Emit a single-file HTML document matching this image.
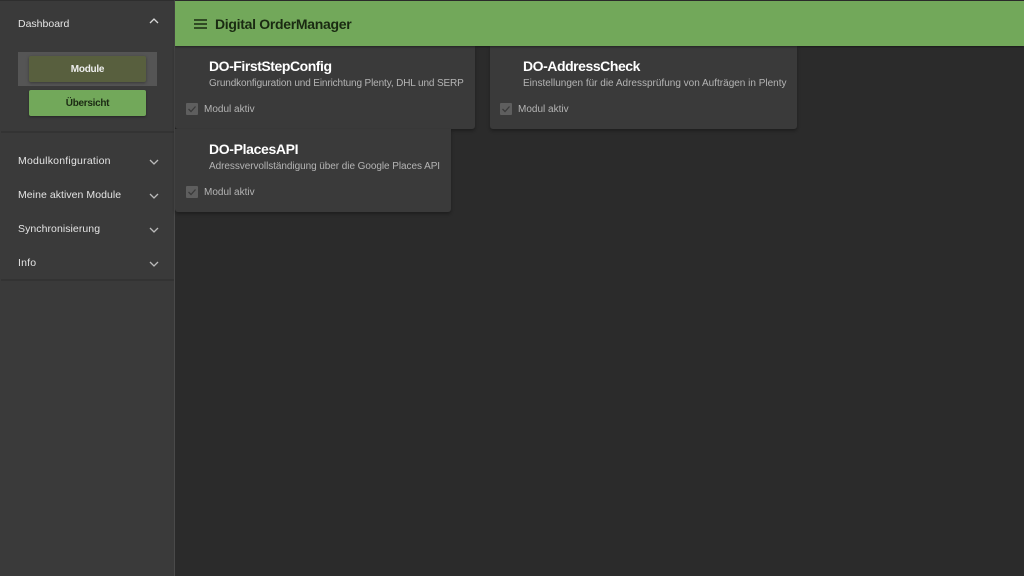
<!DOCTYPE html>
<html><head><meta charset="utf-8">
<style>
*{box-sizing:border-box}
html,body{margin:0;padding:0;width:1024px;height:576px;overflow:hidden;background:#2b2b2b;font-family:"Liberation Sans",sans-serif}
.a{position:absolute;white-space:nowrap}
.side{left:0;top:0;width:175px;height:576px;background:#3a3a3a;border-right:1px solid #4a4a4a;border-top:1px solid #2e2e2e}
.bar{left:175px;top:1px;width:849px;height:45px;background:#72a85a;box-shadow:0 1px 2px rgba(0,0,0,.4)}
.nav{font-size:10.5px;color:#e4e4e4;left:18px;line-height:14px}
.card{background:#3a3a3a;border-radius:0 0 3px 3px;box-shadow:0 2px 3px rgba(0,0,0,.3)}
.t{font-size:14px;font-weight:bold;color:#fff;line-height:18px;letter-spacing:-.45px}
.s{font-size:10px;color:#b4b4b4;line-height:14px}
.l{font-size:10px;color:#b4b4b4;line-height:14px}
.cb{width:12px;height:12px;background:#5e5e5e;border-radius:1px}
</style></head><body>
<div class="a side"></div>
<div class="a" style="left:1px;top:131px;width:173px;height:2px;background:#333"></div>
<div class="a" style="left:1px;top:279px;width:173px;height:2px;background:#333"></div>
<div class="a nav" style="top:17px">Dashboard</div>
<svg class="a" style="left:149px;top:17px" width="10" height="8"><path d="M1 6L5 2L9 6" fill="none" stroke="#d8d8d8" stroke-width="1.3"/></svg>
<div class="a" style="left:18px;top:52px;width:139px;height:34px;background:#555"></div>
<div class="a" style="left:29px;top:56px;width:117px;height:26px;background:#585f3e;border-radius:2px;box-shadow:0 1px 3px rgba(0,0,0,.35);color:#eee;font-size:10px;font-weight:bold;text-align:center;line-height:27px;letter-spacing:-.25px">Module</div>
<div class="a" style="left:29px;top:90px;width:117px;height:26px;background:#72a85a;border-radius:2px;box-shadow:0 1px 2px rgba(0,0,0,.35);color:#1c2a14;font-size:10px;font-weight:bold;text-align:center;line-height:27px;letter-spacing:-.3px">Übersicht</div>
<div class="a nav" style="top:154px;letter-spacing:.22px">Modulkonfiguration</div>
<div class="a nav" style="top:188px;letter-spacing:.05px">Meine aktiven Module</div>
<div class="a nav" style="top:222px;letter-spacing:.06px">Synchronisierung</div>
<div class="a nav" style="top:256px;letter-spacing:.2px">Info</div>
<svg class="a" style="left:149px;top:158px" width="10" height="8"><path d="M1 2L5 6L9 2" fill="none" stroke="#bbb" stroke-width="1.3"/></svg>
<svg class="a" style="left:149px;top:192px" width="10" height="8"><path d="M1 2L5 6L9 2" fill="none" stroke="#bbb" stroke-width="1.3"/></svg>
<svg class="a" style="left:149px;top:226px" width="10" height="8"><path d="M1 2L5 6L9 2" fill="none" stroke="#bbb" stroke-width="1.3"/></svg>
<svg class="a" style="left:149px;top:260px" width="10" height="8"><path d="M1 2L5 6L9 2" fill="none" stroke="#bbb" stroke-width="1.3"/></svg>

<div class="a card" style="left:175px;top:46px;width:300px;height:83px"></div>
<div class="a card" style="left:490px;top:46px;width:307px;height:83px"></div>
<div class="a card" style="left:175px;top:129px;width:276px;height:83px"></div>

<div class="a bar"></div>
<svg class="a" style="left:194px;top:19px" width="13" height="10"><path d="M0 1H13M0 5H13M0 9H13" stroke="#1a2a12" stroke-width="1.4"/></svg>
<div class="a" style="left:215px;top:15px;font-size:14px;font-weight:bold;color:#1a2a12;line-height:18px;letter-spacing:-.3px">Digital OrderManager</div>

<div class="a t" style="left:209px;top:57px">DO-FirstStepConfig</div>
<div class="a s" style="left:209px;top:77px;letter-spacing:-.13px">Grundkonfiguration und Einrichtung Plenty, DHL und SERP</div>
<div class="a cb" style="left:186px;top:103px"></div>
<svg class="a" style="left:186px;top:103px" width="12" height="12"><path d="M2.5 6L5 8.5L9.5 3.5" fill="none" stroke="#3a3a3a" stroke-width="1.3"/></svg>
<div class="a l" style="left:204px;top:103px">Modul aktiv</div>

<div class="a t" style="left:523px;top:57px">DO-AddressCheck</div>
<div class="a s" style="left:523px;top:77px">Einstellungen für die Adressprüfung von Aufträgen in Plenty</div>
<div class="a cb" style="left:500px;top:103px"></div>
<svg class="a" style="left:500px;top:103px" width="12" height="12"><path d="M2.5 6L5 8.5L9.5 3.5" fill="none" stroke="#3a3a3a" stroke-width="1.3"/></svg>
<div class="a l" style="left:518px;top:103px">Modul aktiv</div>

<div class="a t" style="left:209px;top:140px;letter-spacing:-.35px">DO-PlacesAPI</div>
<div class="a s" style="left:209px;top:160px;letter-spacing:-.06px">Adressvervollständigung über die Google Places API</div>
<div class="a cb" style="left:186px;top:186px"></div>
<svg class="a" style="left:186px;top:186px" width="12" height="12"><path d="M2.5 6L5 8.5L9.5 3.5" fill="none" stroke="#3a3a3a" stroke-width="1.3"/></svg>
<div class="a l" style="left:204px;top:186px">Modul aktiv</div>
</body></html>
